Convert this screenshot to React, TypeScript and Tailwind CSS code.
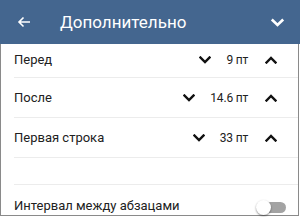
import React from "react"

const Chevron = ({ up = false, className = "" }: { up?: boolean; className?: string }) => (
  <svg width="12" height="8" viewBox="0 0 12 8" className={className}>
    <path
      d={up ? "M1.5 6.5 L6 2 L10.5 6.5" : "M1.5 1.5 L6 6 L10.5 1.5"}
      fill="none"
      stroke="currentColor"
      strokeWidth="2.4"
      strokeLinecap="square"
    />
  </svg>
)

const rows = [
  { label: "Перед", value: "9 пт" },
  { label: "После", value: "14.6 пт" },
  { label: "Первая строка", value: "33 пт" },
]

export default function App() {
  return (
    <div className="w-[300px] h-[217px] overflow-hidden bg-white" style={{ fontFamily: "Roboto, 'Noto Sans', sans-serif" }}>
      {/* Header */}
      <div className="h-[44px] bg-[#44668f] flex items-center text-white">
        <svg width="14" height="12" viewBox="0 0 14 12" className="ml-[17px]">
          <path d="M13 6 H2 M6.5 1.5 L2 6 L6.5 10.5" fill="none" stroke="white" strokeWidth="1.6" />
        </svg>
        <span className="ml-[29px] text-[17px] leading-none">Дополнительно</span>
        <svg width="15" height="9" viewBox="0 0 15 9" className="ml-auto mr-[15px]">
          <path d="M1.8 1.5 L7.5 7 L13.2 1.5" fill="none" stroke="white" strokeWidth="2.6" />
        </svg>
      </div>

      {/* Body */}
      <div className="h-[172px] border-l border-r border-b border-[#8a8a8a] w-[299px] text-[#212121]">
        {rows.map((r, i) => (
          <div
            key={r.label}
            className={`flex items-center ml-[13px] border-b border-[#ececec] pr-[21px] ${i === 0 ? "h-[34px] pb-[2px]" : "h-[40px]"}`}
          >
            <span className="text-[13px]">{r.label}</span>
            <div className="ml-auto flex items-center">
              <Chevron className="text-[#111]" />
              <span className="ml-[15px] text-[12px] leading-none whitespace-nowrap tracking-[-0.2px]">{r.value}</span>
              <Chevron up className="ml-[17px] text-[#111]" />
            </div>
          </div>
        ))}
        <div className="h-[27px] ml-[13px] border-b border-[#ececec]" />
        <div className="h-[40px] ml-[13px] flex items-start pt-[13px] pr-[12px]">
          <span className="text-[13px] leading-[16px]">Интервал между абзацами</span>
          <div className="ml-auto relative w-[30px] h-[14px] mt-[2px]">
            <div className="absolute left-[2px] right-0 top-[2px] h-[11px] rounded-full bg-[#a3a3a3]" />
            <div className="absolute left-0 top-0 w-[15px] h-[15px] rounded-full bg-white shadow-[0_1px_2px_rgba(0,0,0,0.45)]" />
          </div>
        </div>
      </div>
    </div>
  )
}
